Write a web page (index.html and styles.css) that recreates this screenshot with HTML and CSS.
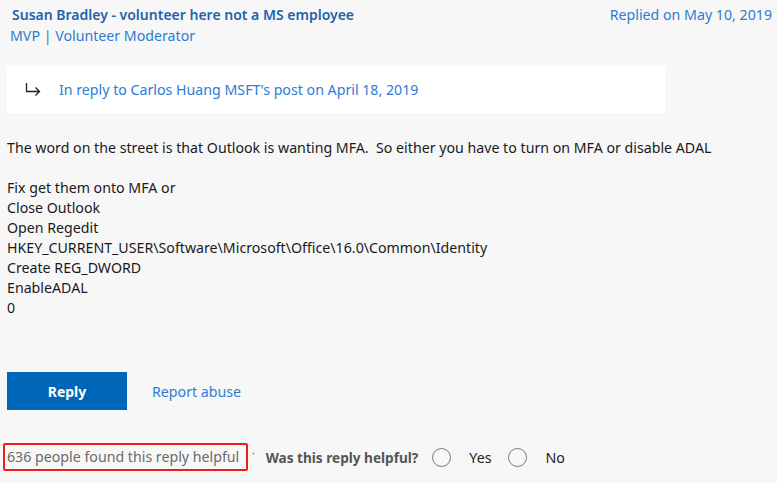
FILE: index.html
```html
<!DOCTYPE html>
<html>
<head>
<meta charset="utf-8">
<link rel="stylesheet" href="styles.css">
</head>
<body>
<div class="post">
  <div class="head">
    <div class="author">
      <a class="name">Susan Bradley - volunteer here not a MS employee</a>
      <div class="role">MVP | Volunteer Moderator</div>
    </div>
    <div class="date">Replied on May 10, 2019</div>
  </div>
  <div class="inreply">
    <svg class="arrow" width="16" height="14" viewBox="0 0 16 14"><path d="M1.5 1 V9.5 H14.5 M10.5 5.5 L14.5 9.5 L10.5 13.5" fill="none" stroke="#222" stroke-width="1.3"/></svg>
    <a class="replylink">In reply to Carlos Huang MSFT's post on April 18, 2019</a>
  </div>
  <div class="body">
    <p>The word on the street is that Outlook is wanting MFA.&nbsp; So either you have to turn on MFA or disable ADAL</p>
    <p>Fix get them onto MFA or<br>Close Outlook<br>Open Regedit<br>HKEY_CURRENT_USER\Software\Microsoft\Office\16.0\Common\Identity<br>Create REG_DWORD<br>EnableADAL<br>0</p>
  </div>
  <div class="actions">
    <button class="btn">Reply</button>
    <a class="abuse">Report abuse</a>
  </div>
  <div class="helpful">
    <span class="count">636 people found this reply helpful</span>
    <span class="dot">&middot;</span>
    <span class="question">Was this reply helpful?</span>
    <span class="radio"></span><span class="opt">Yes</span>
    <span class="radio"></span><span class="opt">No</span>
  </div>
</div>
</body>
</html>
```
FILE: styles.css
```css
html, body {
  margin: 0;
  padding: 0;
  background: #f7f7f7;
}
body {
  font-family: "Noto Sans", "Open Sans", sans-serif;
  font-size: 14.2px;
  color: #1f1f1f;
}
.post {
  padding: 5px 5px 0 7px;
}
.head {
  display: flex;
  justify-content: space-between;
  line-height: 20px;
}
.name {
  display: block;
  color: #1f63ab;
  font-weight: 600;
  padding-left: 5px;
  font-size: 14px;
}
.role {
  color: #2f7bd0;
  margin-top: 1px;
  padding-left: 3px;
}
.date {
  color: #2f7bd0;
}
.inreply {
  margin-top: 20px;
  width: 658px;
  height: 47px;
  background: #fff;
  display: flex;
  align-items: center;
  box-sizing: border-box;
  padding-left: 18px;
}
.arrow {
  margin-right: 18px;
  margin-top: -2px;
}
.replylink {
  color: #2b7cd3;
}
.body {
  margin-top: 25px;
  line-height: 20px;
  color: #1a1a1a;
}
.body p {
  margin: 0 0 20px 0;
}
.body p:last-child {
  margin-bottom: 0;
}
.actions {
  margin-top: 54px;
  display: flex;
  align-items: center;
}
.btn {
  width: 120px;
  height: 38px;
  background: #0067b8;
  color: #fff;
  border: none;
  font-family: inherit;
  font-size: 14px;
  font-weight: 700;
  padding: 0;
}
.abuse {
  color: #2b7cd3;
  margin-left: 25px;
}
.helpful {
  margin-top: 33px;
  margin-left: -4px;
  display: flex;
  align-items: center;
  height: 28px;
}
.count {
  border: 2px solid #ee1c1c;
  border-radius: 2px;
  box-sizing: border-box;
  height: 28px;
  width: 245px;
  padding-left: 2px;
  line-height: 24px;
  color: #6b6b6b;
}
.dot {
  color: #444;
  margin-left: 4px;
  margin-top: -8px;
  font-size: 10px;
}
.question {
  margin-left: 11px;
  font-weight: 700;
  font-size: 13.6px;
  color: #555;
}
.radio {
  display: inline-block;
  width: 17px;
  height: 17px;
  border: 1.5px solid #777;
  border-radius: 50%;
  margin-left: 14px;
  margin-right: 18px;
}
.opt {
  color: #222;
  margin-right: 3px;
}
```
